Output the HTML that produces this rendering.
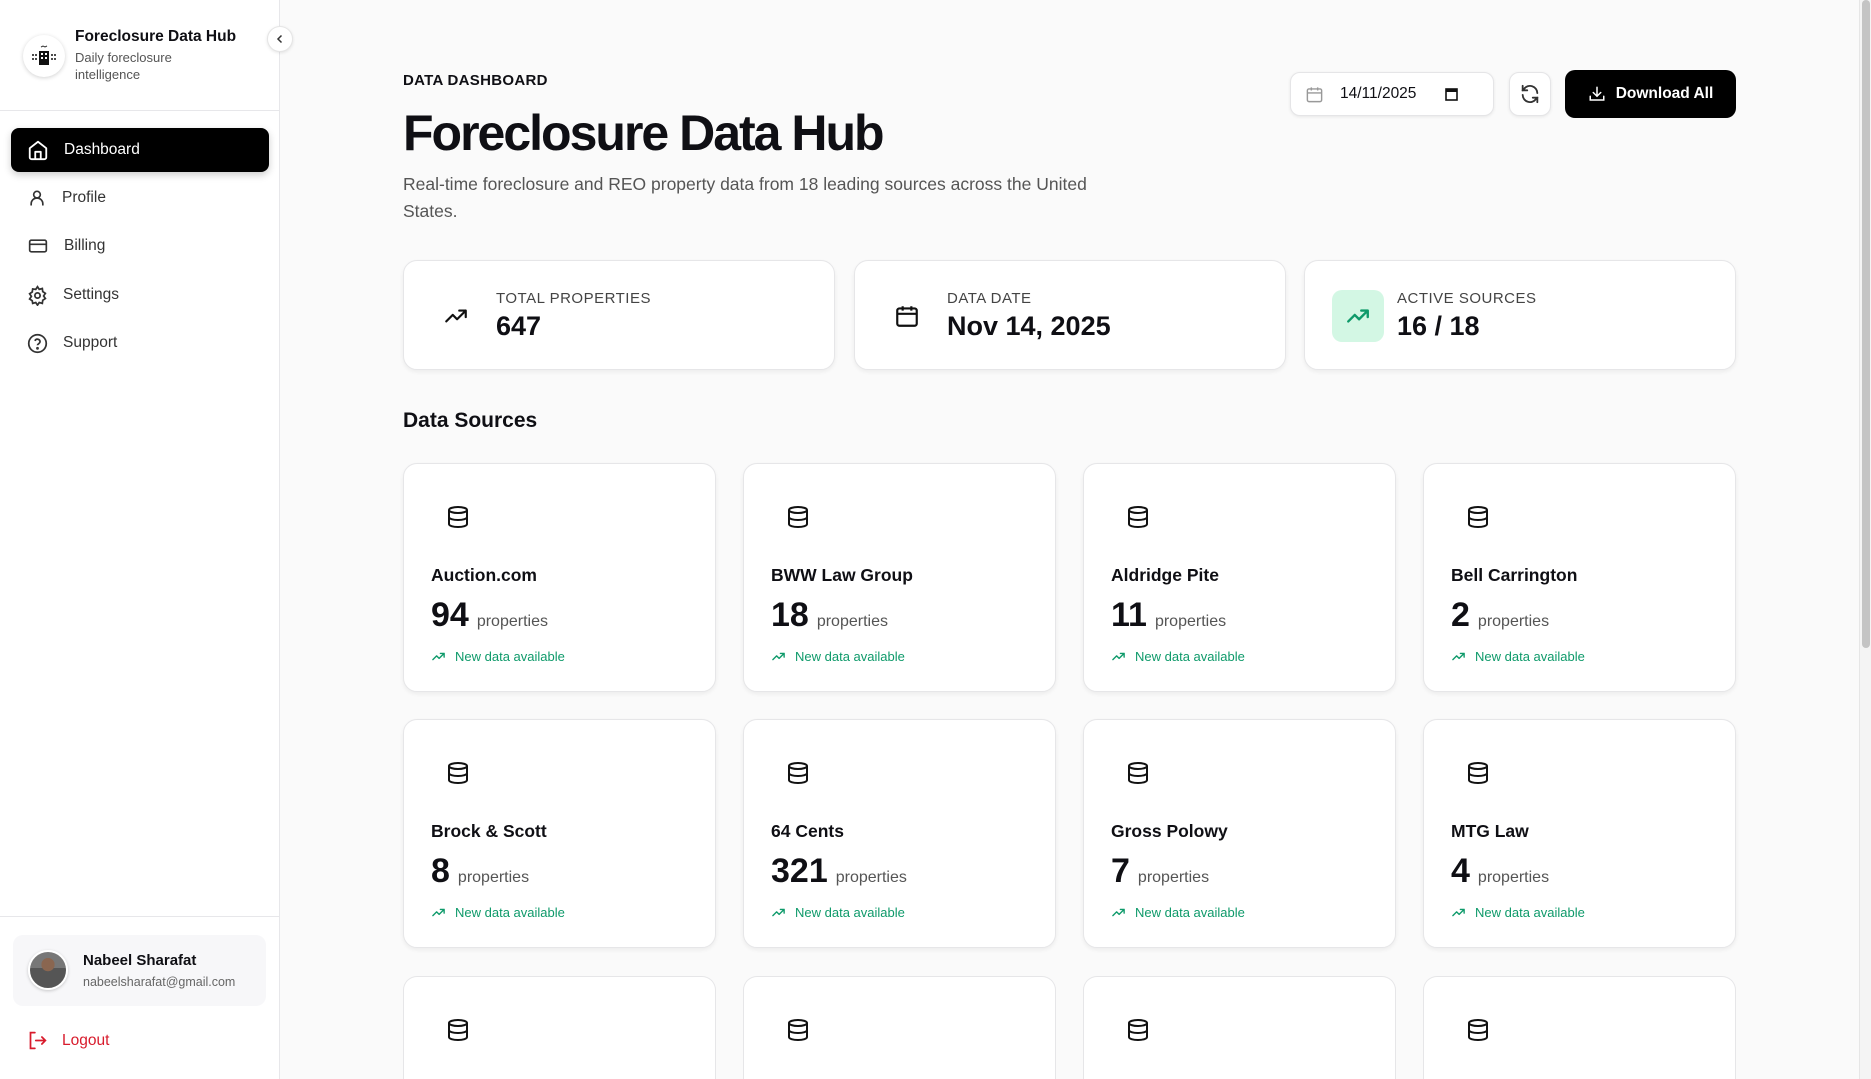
<!DOCTYPE html>
<html><head><meta charset="utf-8"><style>
*{box-sizing:border-box;margin:0;padding:0}
html,body{width:1871px;height:1079px;overflow:hidden}
body{font-family:"Liberation Sans",sans-serif;background:#fafafa;color:#0f0f14;position:relative}
#wrap{position:absolute;left:0;top:0;width:1871px;height:1079px;overflow:hidden}
.sb{position:absolute;left:0;top:0;width:280px;height:1079px;background:#fff;border-right:1px solid #e7e7ea}
.logo{position:absolute;left:23px;top:35px;width:42px;height:42px;border-radius:50%;background:#fff;box-shadow:0 1px 4px rgba(0,0,0,.18);display:flex;align-items:center;justify-content:center}
.t1{position:absolute;left:75px;top:28px;font-size:15.5px;font-weight:700}
.t2{position:absolute;left:75px;top:49px;font-size:13px;color:#555;line-height:17px;width:130px}
.col{position:absolute;left:267px;top:26px;width:26px;height:26px;border-radius:50%;background:#fff;border:1px solid #e5e5e5;box-shadow:0 1px 3px rgba(0,0,0,.1);display:flex;align-items:center;justify-content:center}
.hr{position:absolute;left:0;width:280px;height:1px;background:#e7e7ea}
.nav{position:absolute;left:11px;width:258px;height:44px;border-radius:8px;display:flex;align-items:center;padding-left:16px;font-size:15.5px;color:#333}
.nav svg{margin-right:15px}
.nav.act{background:#000;color:#fff;box-shadow:0 3px 8px rgba(0,0,0,.2)}
.user{position:absolute;left:13px;top:935px;width:253px;height:71px;border-radius:10px;background:#f7f7f9}
.av{position:absolute;left:15px;top:15px;width:40px;height:40px;border-radius:50%;border:2px solid #fff;box-shadow:0 1px 3px rgba(0,0,0,.2);background:radial-gradient(circle at 50% 35%,#8a6650 0 22%,transparent 23%),linear-gradient(#777 0 45%,#555 45%);overflow:hidden}
.main{position:absolute;left:403px;top:0}
.lbl{font-size:15px;font-weight:600;letter-spacing:.3px}
.btn{position:absolute;background:#fff;border:1px solid #e5e5e7;border-radius:10px;box-shadow:0 1px 3px rgba(0,0,0,.08);display:flex;align-items:center}
.stat{position:absolute;top:260px;width:432px;height:110px;background:#fff;border:1px solid #e6e6e8;border-radius:14px;box-shadow:0 2px 4px rgba(0,0,0,.06)}
.stat .l{position:absolute;left:92px;top:29px;font-size:15px;color:#444;letter-spacing:.5px}
.stat .v{position:absolute;left:92px;top:50px;font-size:27px;font-weight:700}
.stat .i{position:absolute;left:30px;top:33px;width:44px;height:44px;display:flex;align-items:center;justify-content:center;border-radius:10px}
.card{position:absolute;width:313px;height:229px;background:#fff;border:1px solid #e6e6e8;border-radius:14px;box-shadow:0 2px 4px rgba(0,0,0,.06)}
.card.r3{height:103px;border-bottom:none;border-radius:14px 14px 0 0;box-shadow:none}
.card svg.db{position:absolute;left:42px;top:41px}
.card .n{position:absolute;left:27px;top:101px;font-size:17.5px;font-weight:600}
.card .c{position:absolute;left:27px;top:132px;font-size:34px;font-weight:700}
.card .c span{font-size:16px;font-weight:400;color:#555;margin-left:8px}
.card .g{position:absolute;left:27px;top:185px;font-size:13px;color:#0e9a6a;display:flex;align-items:center}
.card .g svg{margin-right:9px}
</style></head><body><div id="wrap">
<div class="sb">
<div class="logo"><svg width="28" height="28" viewBox="0 0 28 28"><path d="M11 5l2-1 2 1 2-1" stroke="#333" fill="none" stroke-width="1"/><rect x="9" y="9" width="10" height="14" fill="#111"/><g fill="#fff"><rect x="11" y="11" width="2" height="2"/><rect x="15" y="11" width="2" height="2"/><rect x="11" y="15" width="2" height="2"/><rect x="15" y="15" width="2" height="2"/></g><path d="M2 13h5M2 17h5M21 13h5M21 17h5" stroke="#111" stroke-width="1.5" stroke-dasharray="2 1"/></svg></div>
<div class="t1">Foreclosure Data Hub</div>
<div class="t2">Daily foreclosure intelligence</div>
<div class="hr" style="top:110px"></div>
<div class="nav act" style="top:128px"><svg width="22" height="22" viewBox="0 0 24 24" fill="none" stroke="#fff" stroke-width="2" stroke-linejoin="round"><path d="M3 10l9-7 9 7v10a2 2 0 0 1-2 2H5a2 2 0 0 1-2-2z"/><path d="M9 22v-8h6v8"/></svg>Dashboard</div>
<div class="nav" style="top:176px"><svg width="20" height="20" viewBox="0 0 24 24" fill="none" stroke="#333" stroke-width="2"><circle cx="12" cy="8" r="4"/><path d="M5 21v-2a7 7 0 0 1 14 0v2"/></svg>Profile</div>
<div class="nav" style="top:224px"><svg width="22" height="20" viewBox="0 0 24 24" fill="none" stroke="#333" stroke-width="2"><rect x="2" y="5" width="20" height="14" rx="2"/><path d="M2 10h20"/></svg>Billing</div>
<div class="nav" style="top:273px"><svg width="21" height="21" viewBox="0 0 24 24" fill="none" stroke="#333" stroke-width="2"><circle cx="12" cy="12" r="3"/><path d="M12 2l2 3 3.5-1 .5 3.5 3 2-2 3 2 3-3 2-.5 3.5-3.5-1-2 3-2-3-3.5 1L6 18l-3-2 2-3-2-3 3-2 .5-3.5L10 5z"/></svg>Settings</div>
<div class="nav" style="top:321px"><svg width="21" height="21" viewBox="0 0 24 24" fill="none" stroke="#333" stroke-width="2"><circle cx="12" cy="12" r="10"/><path d="M9.1 9a3 3 0 0 1 5.8 1c0 2-3 2.5-3 4"/><circle cx="12" cy="17.5" r=".6" fill="#333"/></svg>Support</div>
<div class="hr" style="top:916px"></div>
<div class="user"><div class="av"></div><div style="position:absolute;left:70px;top:17px;font-size:15px;font-weight:700">Nabeel Sharafat</div><div style="position:absolute;left:70px;top:40px;font-size:12.5px;color:#666">nabeelsharafat@gmail.com</div></div>
<div style="position:absolute;left:27px;top:1030px;display:flex;align-items:center;color:#d81b2c;font-size:15.5px"><svg width="21" height="21" viewBox="0 0 24 24" fill="none" stroke="#d81b2c" stroke-width="2" stroke-linecap="round"><path d="M9 3H4v18h5"/><path d="M10 12h11M17 8l4 4-4 4"/></svg><span style="margin-left:14px">Logout</span></div>
</div>
<div class="col"><svg width="10" height="10" viewBox="0 0 10 10"><path d="M6.5 1.5L3 5l3.5 3.5" stroke="#333" stroke-width="1.5" fill="none"/></svg></div>

<div class="main">
<div class="lbl" style="position:absolute;top:72px;white-space:nowrap">DATA DASHBOARD</div>
<div style="position:absolute;top:104px;font-size:50px;font-weight:700;letter-spacing:-2px;white-space:nowrap">Foreclosure Data Hub</div>
<div style="position:absolute;top:171px;width:700px;font-size:17.5px;line-height:27px;color:#555">Real-time foreclosure and REO property data from 18 leading sources across the United States.</div>
</div>
<div class="btn" style="left:1290px;top:72px;width:204px;height:44px;padding-left:14px;font-size:15.5px"><svg width="19" height="19" viewBox="0 0 24 24" fill="none" stroke="#999" stroke-width="1.8"><rect x="3" y="5" width="18" height="16" rx="2"/><path d="M3 10h18M8 3v4M16 3v4"/></svg><span style="margin-left:16px">14/11/2025</span><svg style="margin-left:29px" width="13" height="14" viewBox="0 0 13 14"><rect x="1" y="2" width="11" height="11" fill="none" stroke="#111" stroke-width="1.6"/><rect x="1" y="2" width="11" height="3" fill="#111"/></svg></div>
<div class="btn" style="left:1509px;top:72px;width:42px;height:44px;justify-content:center"><svg width="22" height="22" viewBox="0 0 24 24" fill="none" stroke="#333" stroke-width="2" stroke-linecap="round"><path d="M20 11a8 8 0 0 0-14.5-4.5L4 8M4 13a8 8 0 0 0 14.5 4.5L20 16"/><path d="M4 3v5h5M20 21v-5h-5"/></svg></div>
<div style="position:absolute;left:1565px;top:70px;width:171px;height:48px;background:#000;border-radius:10px;color:#fff;font-size:15.5px;font-weight:600;display:flex;align-items:center;justify-content:center"><svg width="18" height="18" viewBox="0 0 24 24" fill="none" stroke="#fff" stroke-width="2" stroke-linecap="round"><path d="M12 3v12M7 10l5 5 5-5M3 15v5h18v-5"/></svg><span style="margin-left:10px">Download All</span></div>

<div class="stat" style="left:403px"><div class="i"><svg width="26" height="26" viewBox="0 0 24 24" fill="none" stroke="#111" stroke-width="2" stroke-linecap="round" stroke-linejoin="round"><path d="M3 17l6-6 4 4 8-8M15 7h6v6"/></svg></div><div class="l">TOTAL PROPERTIES</div><div class="v">647</div></div>
<div class="stat" style="left:854px"><div class="i"><svg width="26" height="26" viewBox="0 0 24 24" fill="none" stroke="#111" stroke-width="2"><rect x="3" y="5" width="18" height="16" rx="2"/><path d="M3 10h18M8 3v4M16 3v4"/></svg></div><div class="l">DATA DATE</div><div class="v">Nov 14, 2025</div></div>
<div class="stat" style="left:1304px"><div class="i" style="left:27px;width:52px;height:52px;top:29px;background:#d3f7e4"><svg width="26" height="26" viewBox="0 0 24 24" fill="none" stroke="#0e9a6a" stroke-width="2.2" stroke-linecap="round" stroke-linejoin="round"><path d="M3 17l6-6 4 4 8-8M15 7h6v6"/></svg></div><div class="l" style="left:92px">ACTIVE SOURCES</div><div class="v">16 / 18</div></div>

<div style="position:absolute;left:403px;top:409px;font-size:21px;font-weight:600">Data Sources</div>

<svg width="0" height="0" style="position:absolute"><defs><symbol id="db" viewBox="0 0 24 24"><g fill="none" stroke="#111" stroke-width="2"><ellipse cx="12" cy="5" rx="9" ry="3"/><path d="M3 5v14c0 1.7 4 3 9 3s9-1.3 9-3V5M3 12c0 1.7 4 3 9 3s9-1.3 9-3"/></g></symbol><symbol id="tr" viewBox="0 0 24 24"><path d="M3 17l6-6 4 4 8-8M15 7h6v6" fill="none" stroke="#0e9a6a" stroke-width="2.2" stroke-linecap="round" stroke-linejoin="round"/></symbol></defs></svg>

<div class="card" style="left:403px;top:463px"><svg class="db" width="24" height="24"><use href="#db"/></svg><div class="n">Auction.com</div><div class="c">94<span>properties</span></div><div class="g"><svg width="15" height="15"><use href="#tr"/></svg>New data available</div></div>
<div class="card" style="left:743px;top:463px"><svg class="db" width="24" height="24"><use href="#db"/></svg><div class="n">BWW Law Group</div><div class="c">18<span>properties</span></div><div class="g"><svg width="15" height="15"><use href="#tr"/></svg>New data available</div></div>
<div class="card" style="left:1083px;top:463px"><svg class="db" width="24" height="24"><use href="#db"/></svg><div class="n">Aldridge Pite</div><div class="c">11<span>properties</span></div><div class="g"><svg width="15" height="15"><use href="#tr"/></svg>New data available</div></div>
<div class="card" style="left:1423px;top:463px"><svg class="db" width="24" height="24"><use href="#db"/></svg><div class="n">Bell Carrington</div><div class="c">2<span>properties</span></div><div class="g"><svg width="15" height="15"><use href="#tr"/></svg>New data available</div></div>

<div class="card" style="left:403px;top:719px"><svg class="db" width="24" height="24"><use href="#db"/></svg><div class="n">Brock &amp; Scott</div><div class="c">8<span>properties</span></div><div class="g"><svg width="15" height="15"><use href="#tr"/></svg>New data available</div></div>
<div class="card" style="left:743px;top:719px"><svg class="db" width="24" height="24"><use href="#db"/></svg><div class="n">64 Cents</div><div class="c">321<span>properties</span></div><div class="g"><svg width="15" height="15"><use href="#tr"/></svg>New data available</div></div>
<div class="card" style="left:1083px;top:719px"><svg class="db" width="24" height="24"><use href="#db"/></svg><div class="n">Gross Polowy</div><div class="c">7<span>properties</span></div><div class="g"><svg width="15" height="15"><use href="#tr"/></svg>New data available</div></div>
<div class="card" style="left:1423px;top:719px"><svg class="db" width="24" height="24"><use href="#db"/></svg><div class="n">MTG Law</div><div class="c">4<span>properties</span></div><div class="g"><svg width="15" height="15"><use href="#tr"/></svg>New data available</div></div>

<div class="card r3" style="left:403px;top:976px"><svg class="db" width="24" height="24"><use href="#db"/></svg></div>
<div class="card r3" style="left:743px;top:976px"><svg class="db" width="24" height="24"><use href="#db"/></svg></div>
<div class="card r3" style="left:1083px;top:976px"><svg class="db" width="24" height="24"><use href="#db"/></svg></div>
<div class="card r3" style="left:1423px;top:976px"><svg class="db" width="24" height="24"><use href="#db"/></svg></div>

<div style="position:absolute;left:1859px;top:0;width:12px;height:1079px;background:#f4f4f4;border-left:1px solid #e6e6e6"></div>
<div style="position:absolute;left:1862px;top:0;width:8px;height:648px;background:#c4c4c4;border-radius:4px"></div>
</div></body></html>
